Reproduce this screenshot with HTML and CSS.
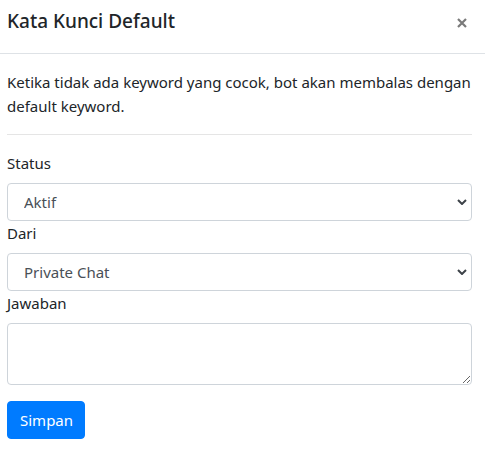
FILE: index.html
```html
<!DOCTYPE html>
<html lang="id">
<head>
<meta charset="utf-8">
<title>Kata Kunci Default</title>
<link rel="stylesheet" href="styles.css">
</head>
<body>
<div class="modal">
  <div class="modal-header">
    <h5 class="modal-title">Kata Kunci Default</h5>
    <button type="button" class="close" aria-label="Close">
      <svg width="10" height="10" viewBox="0 0 10 10"><path d="M1 1 L9 9 M9 1 L1 9" stroke="#7a7a7a" stroke-width="2.2" stroke-linecap="butt"/></svg>
    </button>
  </div>
  <div class="modal-body">
    <p class="intro">Ketika tidak ada keyword yang cocok, bot akan membalas dengan default keyword.</p>
    <hr class="divider">
    <form class="form">
      <label class="label" for="status">Status</label>
      <div class="select-wrap">
        <select id="status" class="control select"><option>Aktif</option><option>Nonaktif</option></select>
        <svg class="chevron" width="10" height="6" viewBox="0 0 10 6"><path d="M1 1 L5 5 L9 1" fill="none" stroke="#3d4248" stroke-width="2"/></svg>
      </div>
      <label class="label" for="dari">Dari</label>
      <div class="select-wrap">
        <select id="dari" class="control select"><option>Private Chat</option><option>Group Chat</option></select>
        <svg class="chevron" width="10" height="6" viewBox="0 0 10 6"><path d="M1 1 L5 5 L9 1" fill="none" stroke="#3d4248" stroke-width="2"/></svg>
      </div>
      <label class="label" for="jawaban">Jawaban</label>
      <textarea id="jawaban" class="control textarea" rows="2"></textarea>
      <button type="button" class="btn-primary">Simpan</button>
    </form>
  </div>
</div>
</body>
</html>
```

FILE: styles.css
```css
* { box-sizing: border-box; }
html, body {
  margin: 0;
  padding: 0;
  background: #fff;
}
body {
  font-family: "Noto Sans", "Open Sans", sans-serif;
  font-size: 15px;
  line-height: 24px;
  color: #212529;
  width: 485px;
  height: 462px;
  overflow: hidden;
}
.modal {
  display: flex;
  flex-direction: column;
}
.modal-header {
  display: flex;
  align-items: flex-start;
  justify-content: space-between;
  padding: 9px 13px 20px 7px;
  border-bottom: 1px solid #dee2e6;
}
.modal-title {
  margin: 0;
  font-size: 19px;
  font-weight: 500;
  line-height: 24px;
}
.close {
  border: 0;
  background: transparent;
  padding: 0;
  margin: 9px 5px 0 0;
  width: 10px;
  height: 10px;
  display: flex;
  cursor: pointer;
}
.modal-body {
  padding: 16px 13px 16px 7px;
}
.intro {
  margin: 0 0 16px;
}
.divider {
  margin: 0 0 16px;
  border: 0;
  border-top: 1px solid rgba(0,0,0,0.1);
}
.form {
  display: flex;
  flex-direction: column;
  align-items: flex-start;
}
.label {
  display: block;
  margin-bottom: 8px;
}
.select-wrap {
  position: relative;
  width: 100%;
}
.control {
  display: block;
  width: 100%;
  font-family: inherit;
  font-size: 15px;
  line-height: 24px;
  color: #495057;
  background: #fff;
  border: 1px solid #ced4da;
  border-radius: 4px;
  padding: 6px 12px;
}
.select {
  height: 38px;
  -webkit-appearance: none;
  appearance: none;
  padding-left: 16px;
}
.chevron {
  position: absolute;
  right: 5px;
  top: 16px;
  pointer-events: none;
}
.textarea {
  height: 62px;
  resize: vertical;
  margin-bottom: 16px;
}
.btn-primary {
  font-family: inherit;
  font-size: 15px;
  line-height: 24px;
  color: #fff;
  background: #007bff;
  border: 1px solid #007bff;
  border-radius: 4px;
  padding: 6px 12px;
  width: 78px;
  height: 38px;
}
```
